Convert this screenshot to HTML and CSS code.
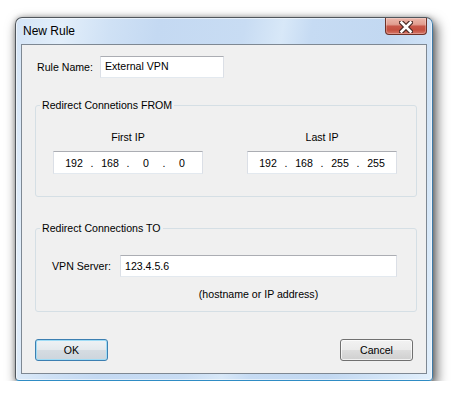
FILE: index.html
```html
<!DOCTYPE html>
<html>
<head>
<meta charset="utf-8">
<title>New Rule</title>
<link rel="stylesheet" href="styles.css">
</head>
<body>
<div class="window">
  <div class="titlebar">
    <span class="title">New Rule</span>
    <div class="close">
      <svg width="14" height="12" viewBox="0 0 14 12">
        <path d="M2.5 1.5 L11.5 10.5 M11.5 1.5 L2.5 10.5" stroke="#4b2a25" stroke-width="5" stroke-linecap="square" fill="none"/>
        <path d="M2.5 1.5 L11.5 10.5 M11.5 1.5 L2.5 10.5" stroke="#ffffff" stroke-width="2.6" stroke-linecap="square" fill="none"/>
      </svg>
    </div>
  </div>
  <div class="client">
    <div class="rule-row">
      <span class="rule-label">Rule Name:</span>
      <div class="textbox rule-input">External VPN</div>
    </div>

    <fieldset class="group group-from">
      <legend>Redirect Connetions FROM</legend>
      <div class="ip-cols">
        <div class="ip-col">
          <div class="ip-label">First IP</div>
          <div class="textbox ipbox">
            <span class="oct">192</span><span class="dot">.</span><span class="oct">168</span><span class="dot">.</span><span class="oct">0</span><span class="dot">.</span><span class="oct">0</span>
          </div>
        </div>
        <div class="ip-col">
          <div class="ip-label">Last IP</div>
          <div class="textbox ipbox">
            <span class="oct">192</span><span class="dot">.</span><span class="oct">168</span><span class="dot">.</span><span class="oct">255</span><span class="dot">.</span><span class="oct">255</span>
          </div>
        </div>
      </div>
    </fieldset>

    <fieldset class="group group-to">
      <legend>Redirect Connections TO</legend>
      <div class="vpn-row">
        <span class="vpn-label">VPN Server:</span>
        <div class="textbox vpn-input">123.4.5.6</div>
      </div>
      <div class="hint-row">
        <span class="hint">(hostname or IP address)</span>
      </div>
    </fieldset>

    <div class="buttons">
      <div class="btn btn-default">OK</div>
      <div class="btn">Cancel</div>
    </div>
  </div>
</div>
</body>
</html>
```

FILE: styles.css
```css
html, body {
  margin: 0;
  background: #ffffff;
}
body {
  padding: 17px 0 0 15px;
  font-family: "Liberation Sans", Arial, sans-serif;
  font-size: 10.6px;
  color: #000;
}
.window {
  width: 418px;
  height: 364px;
  box-sizing: border-box;
  border: 1px solid #50565c;
  border-right-color: #3f7aa6;
  border-bottom-color: #2f8cc4;
  border-radius: 7px 7px 4px 4px;
  padding: 0 5px 6px;
  display: flex;
  flex-direction: column;
  background:
    linear-gradient(100deg,
      #d4e4f6 0%, #e2eefa 10%, #cfe1f5 20%, #c4d9f2 30%,
      #c8dcf3 48%, #d8e8f8 56%, #c6dbf3 62%, #c2d8f1 78%,
      #d6e7f8 92%, #e3f0fc 100%);
  box-shadow: inset 0 0 0 1px rgba(255,255,255,0.55), 3px 5px 12px 1px rgba(0,0,0,0.6), 0 0 5px rgba(0,0,0,0.25);
}
.titlebar {
  height: 26px;
  display: flex;
  justify-content: space-between;
  align-items: flex-start;
  flex: none;
}
.title {
  font-size: 12px;
  line-height: 14px;
  margin: 6px 0 0 2px;
  color: #000;
}
.close {
  width: 42px;
  height: 17px;
  box-sizing: border-box;
  border: 1px solid #6e3228;
  border-top: none;
  border-radius: 0 0 4px 4px;
  background: linear-gradient(#ecb7ab 0%, #e19e90 40%, #c8584a 52%, #c4503f 75%, #d6786a 100%);
  box-shadow: inset 0 0 0 1px rgba(255,255,255,0.25);
  display: flex;
  align-items: center;
  justify-content: center;
  padding-top: 1px;
}
.close svg {
  display: block;
}
.client {
  height: 330px;
  box-sizing: border-box;
  border: 1px solid #7e8893;
  background: #f0f0f0;
  flex: none;
}
.textbox {
  box-sizing: border-box;
  background: #ffffff;
  border: 1px solid #e3e9ef;
  border-top-color: #abadb3;
  border-left-color: #dbdfe6;
  border-right-color: #dbdfe6;
  display: flex;
  align-items: center;
}
.rule-row {
  display: flex;
  align-items: center;
  margin: 11px 0 0 15px;
  height: 22px;
}
.rule-label {
  width: 63px;
}
.rule-input {
  width: 124px;
  height: 22px;
  padding-left: 4px;
  align-items: flex-start;
  padding-top: 3px;
}
.group {
  margin: 20px 0 0 13px;
  width: 382px;
  box-sizing: border-box;
  border: 1px solid #d5dfe5;
  border-radius: 3px;
  min-width: 0;
}
.group legend {
  padding: 0 2px;
  line-height: 14px;
}
.group-from {
  padding: 18px 17px 22px 17px;
}
.group-from legend {
  margin-left: -13px;
}
.ip-cols {
  display: flex;
  gap: 44px;
}
.ip-col {
  width: 150px;
}
.ip-label {
  text-align: center;
  line-height: 14px;
}
.ipbox {
  margin-top: 7px;
  height: 23px;
  padding-left: 6px;
}
.oct {
  width: 28px;
  text-align: center;
}
.dot {
  width: 8px;
  text-align: center;
}
.group-to {
  margin-top: 24px;
  padding: 20px 17px 10px 16px;
}
.group-to legend {
  margin-left: -12px;
}
.vpn-row {
  display: flex;
  align-items: center;
}
.vpn-label {
  width: 68px;
}
.vpn-input {
  width: 277px;
  height: 22px;
  padding-left: 4px;
}
.hint-row {
  margin-top: 10px;
  padding-left: 68px;
}
.hint {
  display: block;
  width: 277px;
  text-align: center;
  line-height: 14px;
}
.buttons {
  display: flex;
  justify-content: space-between;
  margin: 27px 13px 0 13px;
}
.btn {
  width: 73px;
  height: 22px;
  box-sizing: border-box;
  border: 1px solid #707070;
  border-radius: 3px;
  background: linear-gradient(#f2f2f2 0%, #ebebeb 48%, #dddddd 52%, #cfcfcf 100%);
  box-shadow: inset 0 0 0 1px rgba(255,255,255,0.7);
  display: flex;
  align-items: center;
  justify-content: center;
}
.btn-default {
  border-color: #3c7fb1;
  background: linear-gradient(#eef2f5 0%, #e4e9ed 48%, #d5dce2 52%, #cdd5dc 100%);
  box-shadow: inset 0 0 0 1px #9fdcf6;
}
```
